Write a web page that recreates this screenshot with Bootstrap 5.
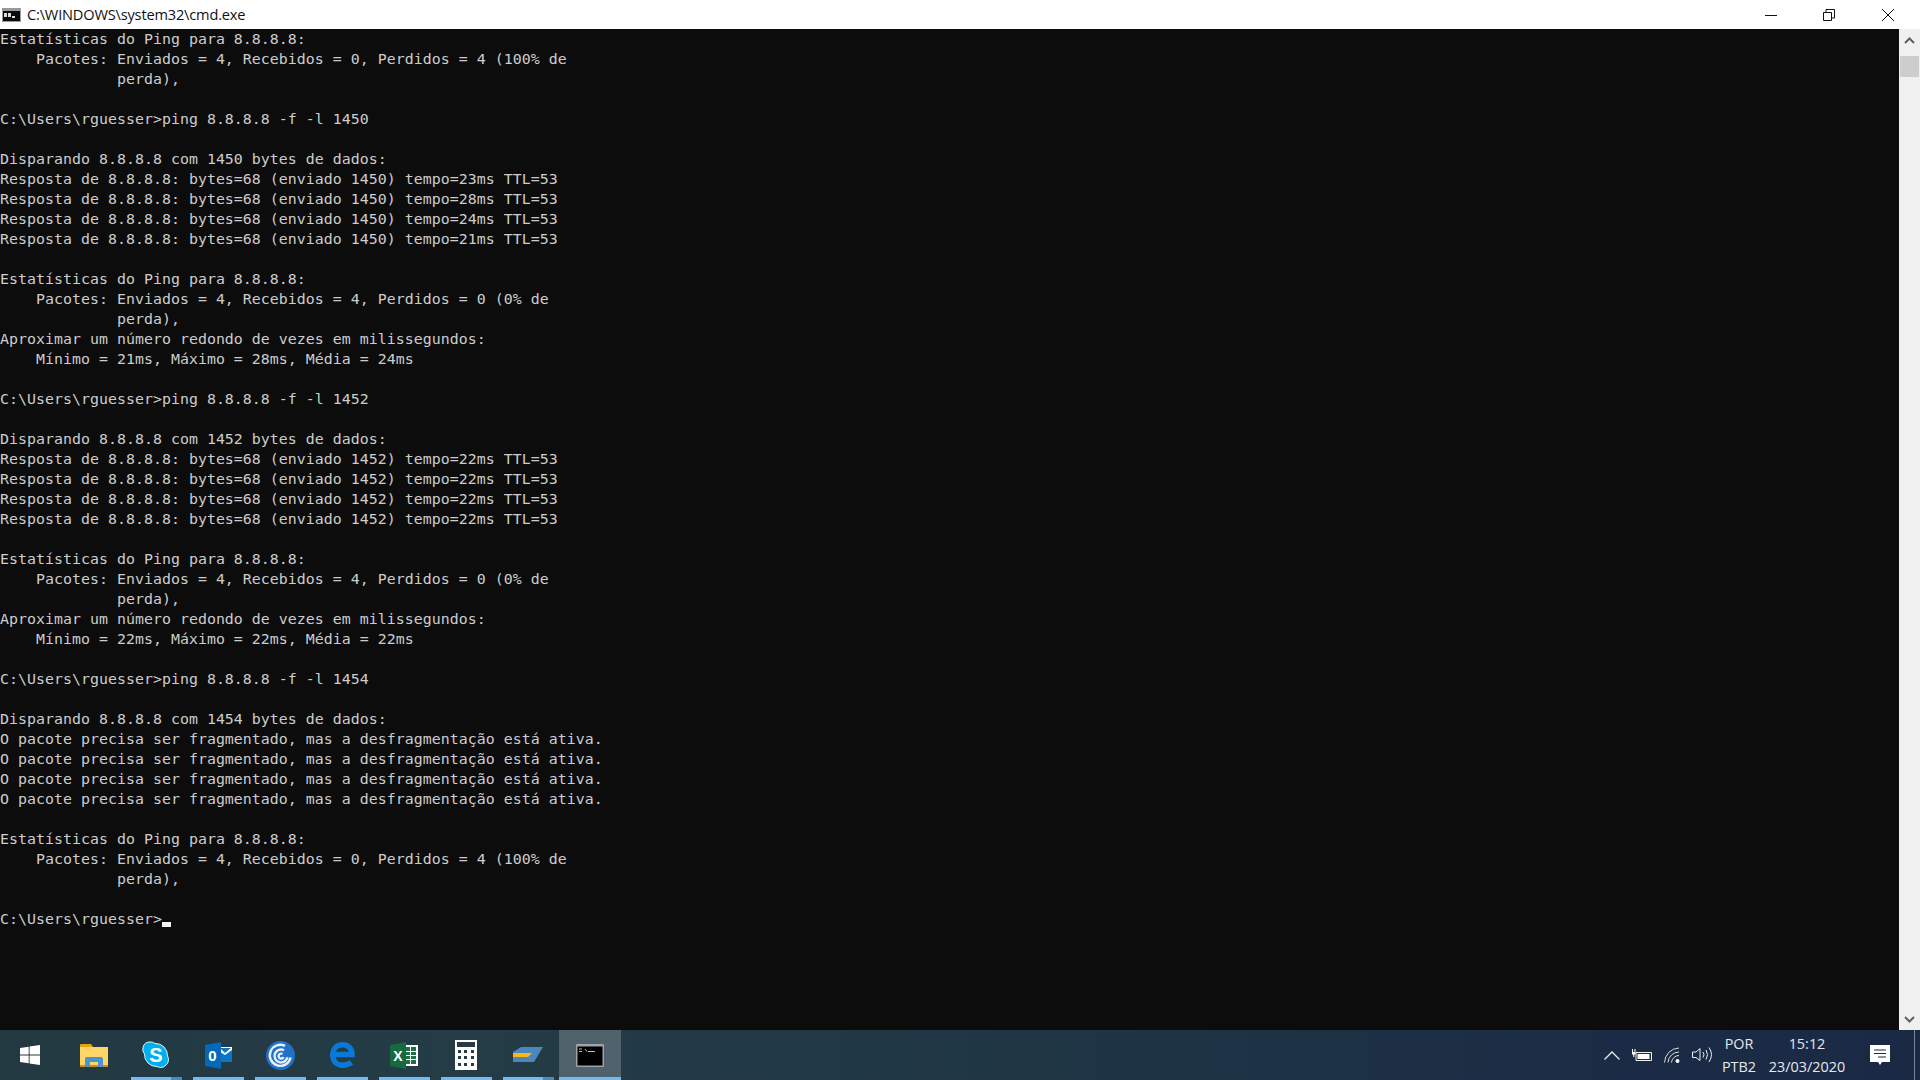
<!DOCTYPE html>
<html lang="pt">
<head>
<meta charset="utf-8">
<title>cmd.exe</title>
<link href="https://cdn.jsdelivr.net/npm/bootstrap@5.3.0/dist/css/bootstrap.min.css" rel="stylesheet">
<style>
html,body{height:100%;margin:0;overflow:hidden}
.screen{width:1920px;height:1080px;background:#0c0c0c}
.titlebar{height:29px;background:#fff;color:#111;font:14.6px/29px "Open Sans","Liberation Sans",sans-serif;letter-spacing:-.18px}
.title-ico{margin:0 6px 0 2px}
.win-btn{width:58.5px;height:29px}
.win-row{margin-right:3px}
.console-wrap{height:1001px;background:#0c0c0c}
.console-text{font:14.9px/20px "DejaVu Sans Mono","Liberation Mono",monospace;letter-spacing:.03px;color:#ccc;margin:0;padding:0;overflow:hidden;width:1899px}
.caret{display:inline-block;width:9px;height:5px;background:#f2f2f2;vertical-align:-3px}
.scroll-col{width:21px;background:#f0f0f0}
.scroll-btn{height:27px}
.scroll-up{padding-bottom:5px}
.scroll-down{padding-top:5px}
.scroll-thumb{height:21px;margin:0 1px;background:#cdcdcd}
.taskbar{height:50px;background:linear-gradient(90deg,#223942 0%,#243c46 25%,#1e3444 60%,#1b2b45 85%,#1a2a44 100%)}
.task-btn{width:62px;height:50px}
.task-btn.first{width:63px}
.task-open::after{content:"";position:absolute;left:6px;right:5px;bottom:0;height:3px;background:#76b9ed}
.task-multi::before{content:"";position:absolute;left:46px;right:5px;bottom:0;height:3px;z-index:1;background:#4c8ab8}
.task-active{background:#4f626b}
.task-active::after{left:0;right:0}
.tray{color:#e4e8ee;font:14.4px/23px "Open Sans","Liberation Sans",sans-serif}
.tray-lang{width:50px;margin-left:2px}
.tray-clock{width:88px;margin-left:-1px}
.tray-msg{margin-left:19px}
.tray-edge{width:1px;height:50px;background:#7d8794;margin-left:24px;margin-right:5px}
.tray-gap{margin-left:12px}
</style>
</head>
<body>
<div class="screen d-flex flex-column">
  <div class="titlebar d-flex align-items-center">
    <svg class="title-ico" width="19" height="14" viewBox="0 0 19 14"><rect width="19" height="14" fill="#9a9a9a"/><rect x="1" y="3" width="17" height="10" fill="#0a0a0a"/><rect x="2" y="5" width="3" height="4" fill="#ddd"/><rect x="6" y="5" width="3" height="4" fill="#ddd"/><rect x="10" y="8" width="3" height="2" fill="#ddd"/></svg>
    <span class="flex-grow-1">C:\WINDOWS\system32\cmd.exe</span>
    <div class="win-row d-flex">
    <div class="win-btn d-flex align-items-center justify-content-center"><svg width="12" height="12"><path d="M0 6.500H12" stroke="#111"/></svg></div>
    <div class="win-btn d-flex align-items-center justify-content-center"><svg width="12" height="12"><path d="M.5 3.500h8v8h-8zM3 3V.5h8.500V9H9" fill="none" stroke="#111"/></svg></div>
    <div class="win-btn d-flex align-items-center justify-content-center"><svg width="12" height="12"><path d="M0 0L12 12M12 0L0 12" stroke="#111"/></svg></div>
    </div>
  </div>
  <div class="console-wrap d-flex">
<pre class="console-text flex-grow-1">Estatísticas do Ping para 8.8.8.8:
    Pacotes: Enviados = 4, Recebidos = 0, Perdidos = 4 (100% de
             perda),

C:\Users\rguesser&gt;ping 8.8.8.8 -f -l 1450

Disparando 8.8.8.8 com 1450 bytes de dados:
Resposta de 8.8.8.8: bytes=68 (enviado 1450) tempo=23ms TTL=53
Resposta de 8.8.8.8: bytes=68 (enviado 1450) tempo=28ms TTL=53
Resposta de 8.8.8.8: bytes=68 (enviado 1450) tempo=24ms TTL=53
Resposta de 8.8.8.8: bytes=68 (enviado 1450) tempo=21ms TTL=53

Estatísticas do Ping para 8.8.8.8:
    Pacotes: Enviados = 4, Recebidos = 4, Perdidos = 0 (0% de
             perda),
Aproximar um número redondo de vezes em milissegundos:
    Mínimo = 21ms, Máximo = 28ms, Média = 24ms

C:\Users\rguesser&gt;ping 8.8.8.8 -f -l 1452

Disparando 8.8.8.8 com 1452 bytes de dados:
Resposta de 8.8.8.8: bytes=68 (enviado 1452) tempo=22ms TTL=53
Resposta de 8.8.8.8: bytes=68 (enviado 1452) tempo=22ms TTL=53
Resposta de 8.8.8.8: bytes=68 (enviado 1452) tempo=22ms TTL=53
Resposta de 8.8.8.8: bytes=68 (enviado 1452) tempo=22ms TTL=53

Estatísticas do Ping para 8.8.8.8:
    Pacotes: Enviados = 4, Recebidos = 4, Perdidos = 0 (0% de
             perda),
Aproximar um número redondo de vezes em milissegundos:
    Mínimo = 22ms, Máximo = 22ms, Média = 22ms

C:\Users\rguesser&gt;ping 8.8.8.8 -f -l 1454

Disparando 8.8.8.8 com 1454 bytes de dados:
O pacote precisa ser fragmentado, mas a desfragmentação está ativa.
O pacote precisa ser fragmentado, mas a desfragmentação está ativa.
O pacote precisa ser fragmentado, mas a desfragmentação está ativa.
O pacote precisa ser fragmentado, mas a desfragmentação está ativa.

Estatísticas do Ping para 8.8.8.8:
    Pacotes: Enviados = 4, Recebidos = 0, Perdidos = 4 (100% de
             perda),

C:\Users\rguesser&gt;<span class="caret"></span></pre>
    <div class="scroll-col d-flex flex-column">
      <div class="scroll-btn scroll-up d-flex align-items-center justify-content-center"><svg width="11" height="7"><path d="M1 6L5.500 1.500L10 6" fill="none" stroke="#606060" stroke-width="2"/></svg></div>
      <div class="scroll-thumb"></div>
      <div class="flex-grow-1"></div>
      <div class="scroll-btn scroll-down d-flex align-items-center justify-content-center"><svg width="11" height="7"><path d="M1 1L5.500 5.500L10 1" fill="none" stroke="#606060" stroke-width="2"/></svg></div>
    </div>
  </div>
  <div class="taskbar d-flex align-items-stretch">
    <div class="task-btn first d-flex align-items-center justify-content-center position-relative">
      <svg width="20" height="20" viewBox="0 0 20 20" class="me-1"><path fill="#fff" d="M0 3L8.700 1.700V9.500H0zM9.600 1.600L20 0V9.500H9.600zM0 10.500H8.700V18.300L0 17zM9.600 10.500H20V20L9.600 18.400z"/></svg>
    </div>
    <div class="task-btn d-flex align-items-center justify-content-center position-relative">
      <svg width="28" height="23" viewBox="0 0 28 23"><path fill="#e5a50f" d="M0 1a1 1 0 0 1 1-1h10l2 3H0z"/><path fill="#ffd567" d="M0 3h28v19a1 1 0 0 1-1 1H1a1 1 0 0 1-1-1z"/><path fill="#c78f1f" d="M0 21h28v2H0z"/><path fill="#4d93cf" d="M5 23v-8a2 2 0 0 1 2-2h14a2 2 0 0 1 2 2v8h-5v-5h-8v5z"/></svg>
    </div>
    <div class="task-btn task-open task-multi d-flex align-items-center justify-content-center position-relative">
      <svg width="28" height="28" viewBox="0 0 28 28"><path fill="#00aff0" stroke="#dff5fd" stroke-width="1" d="M8 1a7 7 0 0 1 5 1.500a12 12 0 0 1 12.500 12.500a7 7 0 0 1-1.500 9a7 7 0 0 1-9 1.500a12 12 0 0 1-12.500-12.500a7 7 0 0 1-1.500-6.500a7 7 0 0 1 7-5.500z"/><text x="14" y="21" text-anchor="middle" font-family="Liberation Sans" font-weight="700" font-size="20" fill="#fff">S</text></svg>
    </div>
    <div class="task-btn task-open d-flex align-items-center justify-content-center position-relative">
      <svg width="27" height="27" viewBox="0 0 27 27"><path fill="#fff" d="M13 5h14v15H13z"/><path fill="#0d74c8" d="M15 6l5 5 6-5zM15 20h12V8l-7 5-5-3z"/><path fill="#0569b9" d="M0 3L16 0V27L0 24z"/><text x="7.500" y="19" text-anchor="middle" font-family="Liberation Sans" font-weight="700" font-size="15" fill="#fff">0</text></svg>
    </div>
    <div class="task-btn task-open d-flex align-items-center justify-content-center position-relative">
      <svg width="29" height="29" viewBox="0 0 29 29"><circle cx="14.500" cy="14.500" r="14.500" fill="#2271c9"/><path fill="none" stroke="#e8f1fb" stroke-width="2.400" d="M19 4.900a10.500 10.500 0 1 0 5.600 11.600M18 9.200a6.500 6.500 0 1 0 3.400 7M16.500 13a2.500 2.500 0 1 0 1 3"/></svg>
    </div>
    <div class="task-btn task-open d-flex align-items-center justify-content-center position-relative">
      <svg width="25" height="26" viewBox="0 0 25 26"><path fill="none" stroke="#0a78d7" stroke-width="5.500" d="M2.500 12.500H22C22 6 18 2.800 12.500 2.800 6.500 2.800 2.700 7 2.700 13c0 6 4 10.200 10 10.200 3.500 0 6.500-1 8.800-2.600"/></svg>
    </div>
    <div class="task-btn task-open d-flex align-items-center justify-content-center position-relative">
      <svg width="28" height="27" viewBox="0 0 28 27"><path fill="#fff" d="M13 3h15v21H13z"/><path fill="#1e7145" d="M15 5h11v17H15z"/><path stroke="#fff" d="M15 9.500h11M15 13.500h11M15 17.500h11M20.500 5v17" fill="none"/><path fill="#17693f" d="M0 3L16 0V27L0 24z"/><text x="8" y="19" text-anchor="middle" font-family="Liberation Sans" font-weight="700" font-size="14" fill="#fff">X</text></svg>
    </div>
    <div class="task-btn task-open d-flex align-items-center justify-content-center position-relative">
      <svg width="22" height="30" viewBox="0 0 22 30"><path fill="#fff" fill-rule="evenodd" d="M0 0h22v30H0zM2 2v5h18V2zM3 10v3h3v-3zM9 10v3h3v-3zM16 10v3h3v-3zM3 16v3h3v-3zM9 16v3h3v-3zM16 16v3h3v-3zM3 23v3h3v-3zM9 23v3h3v-3zM16 23v3h3v-3z"/></svg>
    </div>
    <div class="task-btn task-open task-multi d-flex align-items-center justify-content-center position-relative">
      <svg width="30" height="16" viewBox="0 0 30 16"><path fill="#4b87bd" d="M8 0H30L21 15H0V5z"/><path fill="#fbb80f" d="M0 6H19L15 10H0z"/></svg>
    </div>
    <div class="task-btn task-open task-active d-flex align-items-center justify-content-center position-relative">
      <svg width="28" height="23" viewBox="0 0 28 23"><rect width="28" height="23" rx="1" fill="#9da3a6"/><rect x="1.500" y="2.500" width="25" height="19" fill="#000"/><path stroke="#bbb" d="M3 5h3M3 7.500h3M9 5l2 2.500M12 7.500h7" fill="none"/></svg>
    </div>
    <div class="flex-grow-1"></div>
    <div class="tray d-flex align-items-center">
      <svg width="16" height="9" viewBox="0 0 16 9"><path d="M.5 8.500L8 1l7.500 7.500" fill="none" stroke="#e8ecef" stroke-width="1.300"/></svg>
      <svg class="tray-gap" width="20" height="13" viewBox="0 0 20 13"><path d="M4 3.500H19.500V11.500H4z" fill="none" stroke="#f2f2f2"/><path fill="#fff" d="M5.500 5h12v5h-12zM0 0h1v3H0zM2.500 0h1v3h-1zM0 3h3.500v2.500H2.300V8H1.200V5.500H0z"/></svg>
      <svg class="tray-gap" width="16" height="16" viewBox="0 0 16 16"><path fill="none" stroke="#d8dde2" d="M.5 15.500A15 15 0 0 1 15 1M4 15.500A11 11 0 0 1 15 5M7.500 15.500A7.500 7.500 0 0 1 15 8.500"/><circle cx="13.500" cy="14" r="2" fill="#fff"/></svg>
      <svg class="tray-gap" width="20" height="16" viewBox="0 0 20 16"><path fill="none" stroke="#eef0f2" d="M.5 5H4L8 1.500V13.500L4 10.500H.5zM11 5Q13 7.500 11 10.500M14 3Q17 7.500 14 12.500M17 .5Q22 7.500 17 15"/></svg>
      <div class="tray-lang text-center"><div>POR</div><div>PTB2</div></div>
      <div class="tray-clock text-center"><div>15:12</div><div>23/03/2020</div></div>
      <svg class="tray-msg" width="20" height="20" viewBox="0 0 20 20"><path fill="#fff" d="M0 0H20V17H12L10 20L8 17H0z"/><path stroke="#1b2b45" d="M4 5H16M4 8.500H16M8 12H16"/></svg>
      <div class="tray-edge"></div>
    </div>
  </div>
</div>
</body>
</html>
